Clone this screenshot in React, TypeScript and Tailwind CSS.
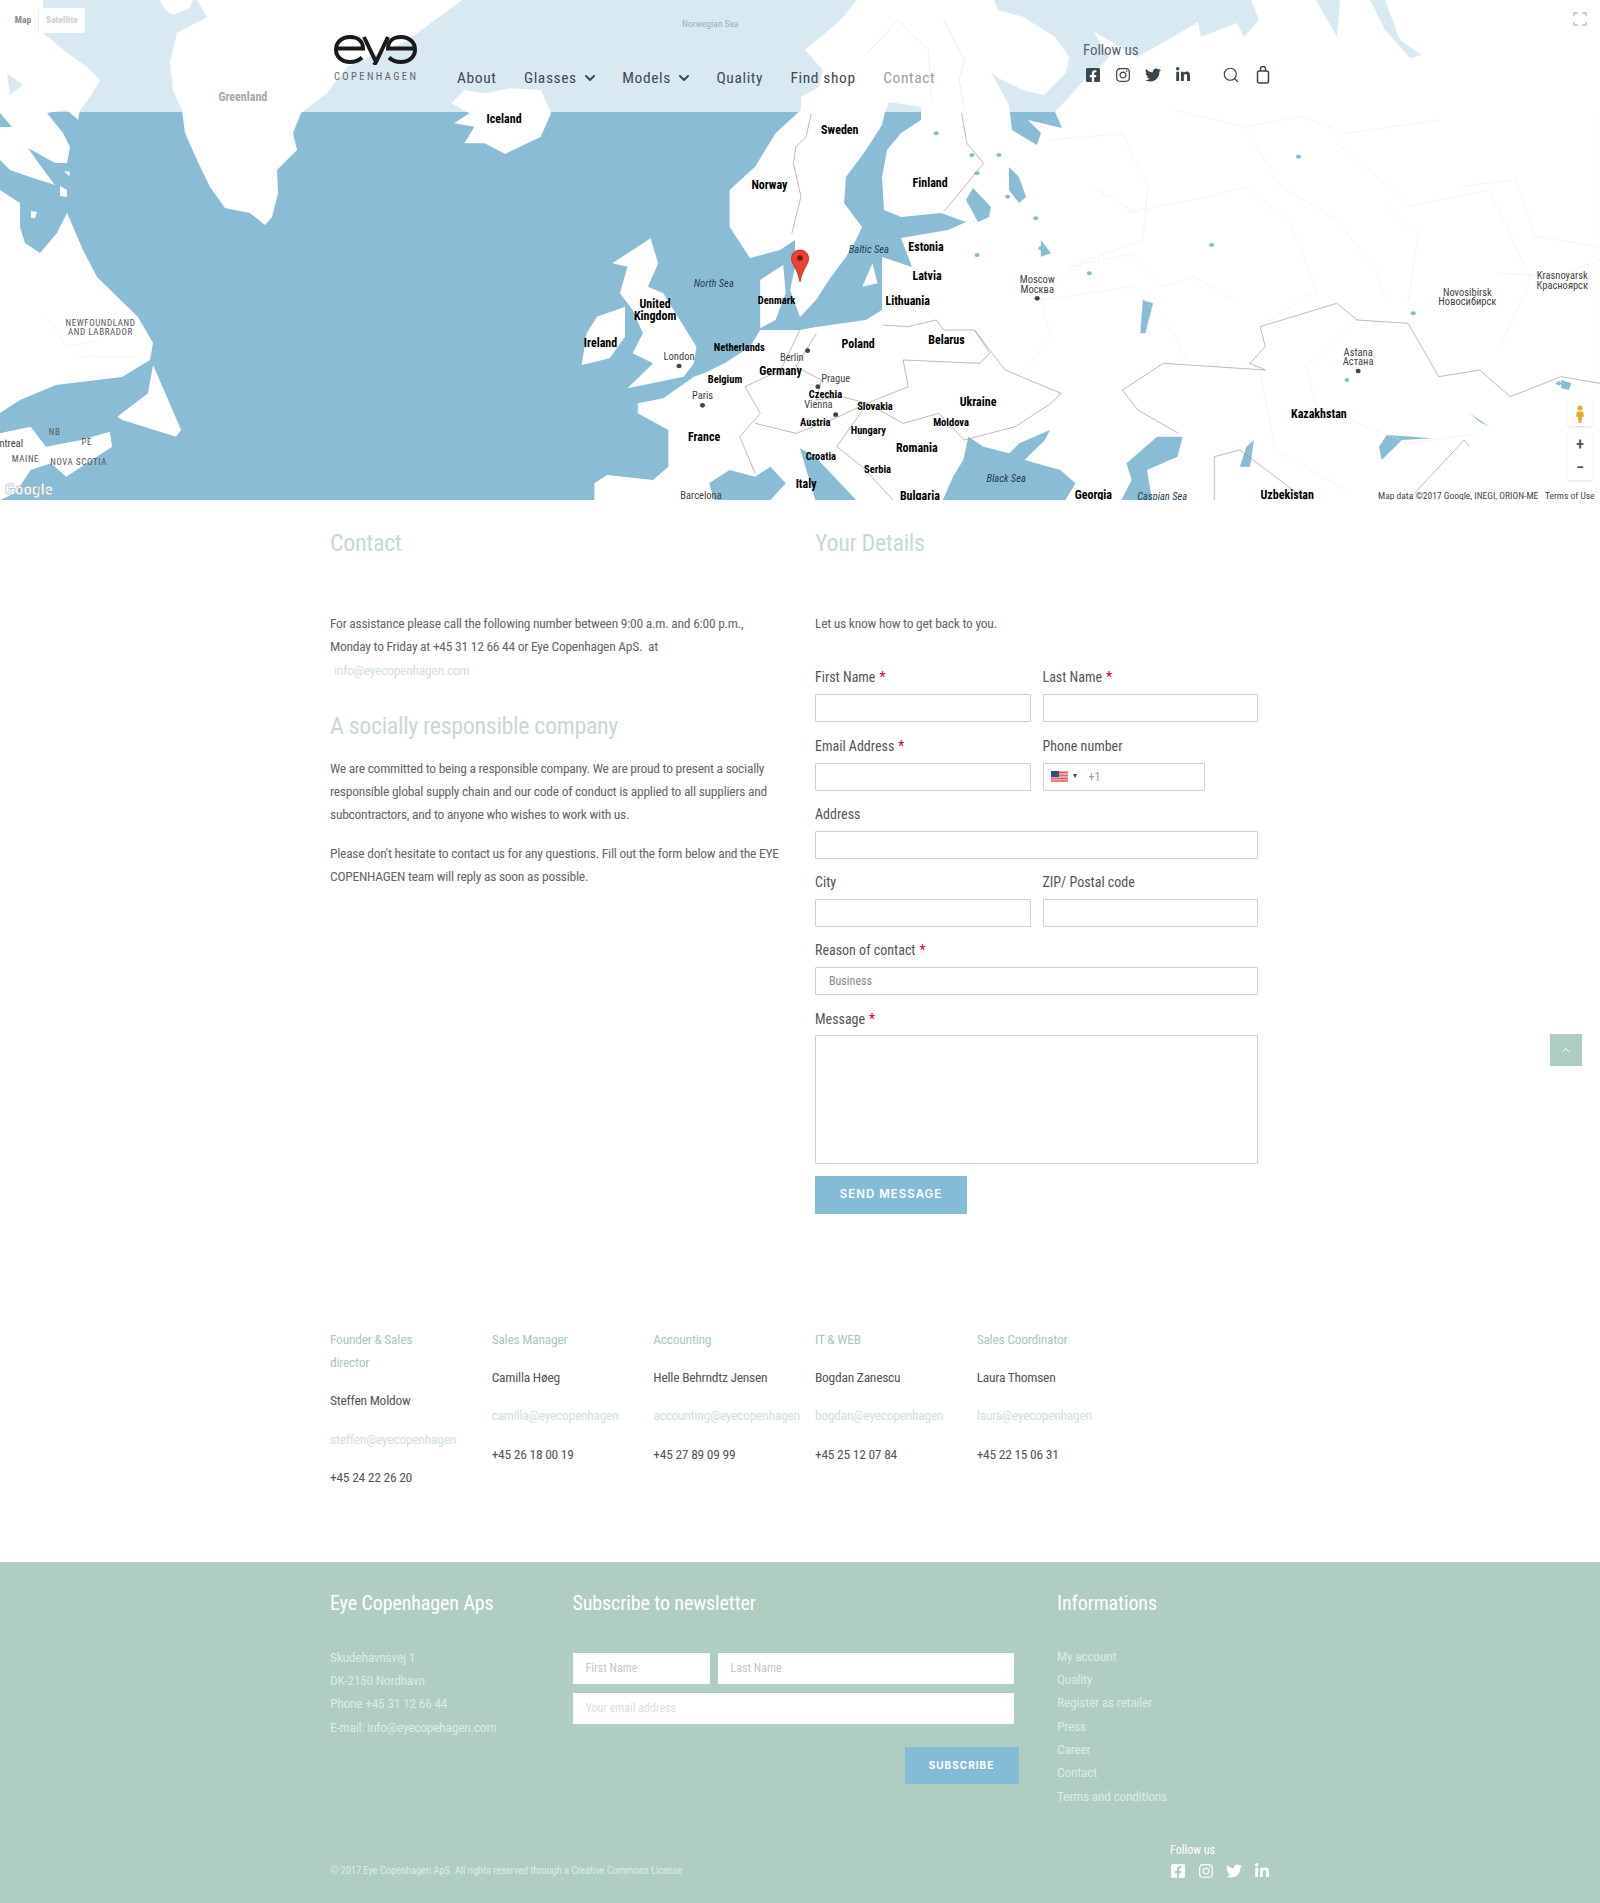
import React from 'react'
import { ChevronDown, ChevronUp, Search } from 'lucide-react'
import { FaFacebookSquare, FaInstagram, FaTwitter, FaLinkedinIn } from 'react-icons/fa'

// map drawing: coordinates are read off the reference crops
// LAND_REAL / WATER_REAL are page pixels, the others go through the group transform
const LAND_REAL = [
  '0,0 43,0 43,33 67,53 87,67 100,80 90,97 80,110 78,120 67,110 63,110 47,113 63,133 70,147 67,163 55,163 28,148 40,165 55,185 30,177 10,170 0,160',
  '0,190 20,203 20,227 25,243 40,253 57,233 67,213 83,250 97,277 138,317 153,343 150,360 122,377 56,385 20,400 0,413',
  '160,0 193,0 190,8 173,15 165,10',
  '197,0 462,0 408,40 347,67 327,93 301,113 293,133 297,150 277,170 278,193 272,217 265,225 250,213 225,208 210,187 197,160 185,133 182,110 173,90 170,63 177,33 207,17',
  '60,186 67,190 67,197 60,196',
  '64,171 70,172 69,176',
  '31,211 37,212 35,218 31,218',
]

const WATER_REAL = [
  '7,73 23,85 10,95',
  '0,113 12,127 0,127',
  '994,0 998,10 1023,17 1055,37 1069,57 1066,73 1044,95 1023,90 998,78 991,72 1009,105 1012,130 1037,145 1041,133 1028,120 1062,128 1055,112 1069,97 1084,80 1109,58 1094,32 1112,42 1137,57 1173,37 1198,22 1201,37 1237,23 1244,37 1259,20 1251,0',
  '1316,0 1337,37 1340,0',
  '1370,0 1385,0 1400,40 1422,55 1410,58 1385,30',
  '800,317 816,300 831,277 846,257 856,240 862,227 844,203 846,177 866,150 882,125 885,112 889,102 921,107 921,120 901,133 887,150 882,177 884,210 901,217 941,213 966,222 948,230 901,238 912,267 882,257 882,287 882,310 866,320 816,327 800,330 760,330 735,333 735,253 750,258 780,250 795,240 795,267 790,290',
  '973,188 991,207 989,217 978,222 966,200',
  '1009,167 1019,177 1026,197 1019,203 1009,190',
]

const LAND = [
  '300,1095 355,1290 345,1310 240,1260 230,1250 290,1180',
  '0,1300 60,1280 90,1340 160,1320 215,1295 220,1340 170,1390 130,1430 100,1390 60,1410 30,1480 0,1500',
  '885,310 910,270 950,280 1000,265 1060,270 1080,340 1060,410 990,462 950,430 910,430 930,380 890,370 920,340',
  '1275,715 1290,790 1270,860 1300,880 1365,1040 1360,1090 1340,1130 1230,1165 1280,1090 1240,1060 1260,1000 1240,930 1215,880 1230,800 1200,790',
  '1170,950 1225,920 1225,1010 1195,1075 1140,1095 1150,1000',
  '1570,330 1570,291 1605,261 1613,210 1578,150 1648,60 1679,0 3136,0 3136,1500 1165,1500 1165,1450 1190,1425 1280,1440 1310,1400 1310,1290 1250,1240 1250,1210 1300,1195 1360,1130 1380,1120 1420,1090 1470,1040 1490,990 1470,775 1430,680 1430,570 1480,500 1520,400',
]

const BLUE = [
  '1400,1500 1390,1450 1430,1410 1480,1430 1510,1400 1540,1450 1510,1500',
  '1568,1345 1598,1370 1678,1500 1598,1500',
  '1898,1310 1928,1340 1978,1360 1998,1330 2058,1290 2048,1320 2008,1380 2078,1410 2108,1450 2088,1500 1848,1500 1868,1430 1888,1380',
  '2208,1390 2268,1310 2318,1310 2308,1370 2248,1410 2258,1500 2198,1500 2218,1440',
  '2703,1340 2718,1305 2808,1315 2748,1320 2708,1380',
  '2443,1340 2458,1320 2450,1400 2430,1400',
  '2880,1240 2920,1280 2900,1265',
  '3060,1140 3080,1150 3075,1170 3060,1165',
  '2040,720 2060,760 2040,770',
  '2240,900 2260,910 2245,1000 2235,1000',
]

const LAKES = [
  [1835, 400], [1905, 465], [1915, 520], [1958, 465], [1975, 590], [2030, 655], [1915, 765], [2040, 745], [2135, 820], [2375, 735], [2545, 470], [2640, 1140], [2770, 940], [3055, 1150],
]

const BORDERS = [
  '1590,340 1580,410 1560,440 1555,490 1570,590 1552,700',
  '1885,340 1895,430 1928,490 1850,635',
  '1730,975 1780,980 1835,960 1850,990 1910,990 1940,1060 1920,1090 1770,1080 1780,1160 1700,1210',
  '1600,1000 1560,1100 1610,1140 1600,1200 1650,1190 1700,1210 1770,1270 1840,1240 1890,1320',
  '1568,990 1530,1110 1460,1160 1490,1240 1450,1310 1480,1420',
  '1480,1270 1560,1300 1630,1260 1700,1210 1640,1340 1690,1400 1750,1500',
  '1910,990 1970,1110 2080,1180 2060,1210 1990,1280 1890,1320',
  '2470,980 2620,910 2660,960 2760,970 2820,1130 2900,1110 2960,1190 3060,1130 3136,1150',
  '2470,980 2480,1040 2450,1090 2480,1110 2280,1090 2200,1170 2230,1230 2310,1300',
  '2380,1500 2380,1370 2430,1350 2560,1500',
  '2880,1340 2870,1320 2760,1500',
]

const FAINT = [
  '1700,160 1760,60 1820,150 1825,300',
  '1850,60 1890,180 1880,240 1890,330',
]

const REGIONS = [
  '2060,420 2200,400 2250,560 2240,720 2100,800 2040,900 2060,1010 2010,1110',
  '2200,640 2370,590 2440,560 2530,670 2580,870 2470,980',
  '2440,380 2510,560 2620,660 2700,820 2720,910',
  '2620,430 2720,560 2760,620 2920,570 3000,840 2940,1040',
  '2040,900 2220,860 2300,1000 2330,1090',
  '2720,620 2780,700 2760,900',
  '2940,820 3050,830 3136,780',
  '2660,960 2560,1100 2580,1220 2760,1330 2900,1300',
  '2100,800 2220,760 2280,860 2340,830 2420,900',
  '2140,560 2230,640',
  '2300,330 2440,380 2550,350 2640,400 2820,360',
  '2860,560 2970,540 3010,710 3136,740',
  '2470,1120 2500,1350 2650,1480',
  '150,1070 270,1070',
  '90,950 130,1040 200,1020',
]

const LABELS: { t: string; x: number; y: number; k: 'b' | 's' | 'r' | 'i' | 'g' | 'p' | 'c' }[] = [
  { t: 'Greenland', x: 476, y: 303, k: 'g' },
  { t: 'Iceland', x: 988, y: 368, k: 'b' },
  { t: 'Norwegian Sea', x: 1392, y: 82, k: 'p' },
  { t: 'Norway', x: 1508, y: 566, k: 'b' },
  { t: 'Sweden', x: 1646, y: 401, k: 'b' },
  { t: 'Finland', x: 1823, y: 560, k: 'b' },
  { t: 'Estonia', x: 1815, y: 752, k: 'b' },
  { t: 'Latvia', x: 1817, y: 841, k: 'b' },
  { t: 'Lithuania', x: 1779, y: 914, k: 'b' },
  { t: 'Baltic Sea', x: 1703, y: 758, k: 'i' },
  { t: 'North Sea', x: 1399, y: 862, k: 'i' },
  { t: 'Denmark', x: 1522, y: 912, k: 's' },
  { t: 'United', x: 1284, y: 925, k: 'b' },
  { t: 'Kingdom', x: 1284, y: 961, k: 'b' },
  { t: 'Ireland', x: 1177, y: 1041, k: 'b' },
  { t: 'Netherlands', x: 1449, y: 1054, k: 's' },
  { t: 'London', x: 1331, y: 1080, k: 'r' },
  { t: 'Berlin', x: 1552, y: 1082, k: 'r' },
  { t: 'Germany', x: 1530, y: 1124, k: 'b' },
  { t: 'Belgium', x: 1421, y: 1150, k: 's' },
  { t: 'Paris', x: 1377, y: 1197, k: 'r' },
  { t: 'France', x: 1380, y: 1322, k: 'b' },
  { t: 'Barcelona', x: 1374, y: 1497, k: 'r' },
  { t: 'Italy', x: 1580, y: 1465, k: 'b' },
  { t: 'Poland', x: 1682, y: 1044, k: 'b' },
  { t: 'Belarus', x: 1855, y: 1031, k: 'b' },
  { t: 'Prague', x: 1638, y: 1145, k: 'r' },
  { t: 'Czechia', x: 1618, y: 1195, k: 's' },
  { t: 'Vienna', x: 1604, y: 1225, k: 'r' },
  { t: 'Slovakia', x: 1715, y: 1230, k: 's' },
  { t: 'Austria', x: 1598, y: 1278, k: 's' },
  { t: 'Hungary', x: 1702, y: 1303, k: 's' },
  { t: 'Ukraine', x: 1917, y: 1219, k: 'b' },
  { t: 'Moldova', x: 1864, y: 1277, k: 's' },
  { t: 'Romania', x: 1797, y: 1357, k: 'b' },
  { t: 'Croatia', x: 1609, y: 1380, k: 's' },
  { t: 'Serbia', x: 1720, y: 1420, k: 's' },
  { t: 'Bulgaria', x: 1803, y: 1500, k: 'b' },
  { t: 'Black Sea', x: 1972, y: 1447, k: 'i' },
  { t: 'Georgia', x: 2143, y: 1496, k: 'b' },
  { t: 'Caspian Sea', x: 2278, y: 1500, k: 'i' },
  { t: 'Moscow', x: 2033, y: 850, k: 'r' },
  { t: 'Москва', x: 2033, y: 878, k: 'r' },
  { t: 'Kazakhstan', x: 2585, y: 1254, k: 'b' },
  { t: 'Uzbekistan', x: 2523, y: 1498, k: 'b' },
  { t: 'Astana', x: 2662, y: 1067, k: 'r' },
  { t: 'Астана', x: 2662, y: 1095, k: 'r' },
  { t: 'Novosibirsk', x: 2876, y: 888, k: 'r' },
  { t: 'Новосибирск', x: 2876, y: 916, k: 'r' },
  { t: 'Krasnoyarsk', x: 3062, y: 838, k: 'r' },
  { t: 'Красноярск', x: 3062, y: 866, k: 'r' },
  { t: 'NEWFOUNDLAND', x: 197, y: 979, k: 'c' },
  { t: 'AND LABRADOR', x: 197, y: 1006, k: 'c' },
  { t: 'NB', x: 107, y: 1305, k: 'c' },
  { t: 'PE', x: 170, y: 1335, k: 'c' },
  { t: 'MAINE', x: 50, y: 1385, k: 'c' },
  { t: 'NOVA SCOTIA', x: 154, y: 1395, k: 'c' },
  { t: 'ntreal', x: 22, y: 1340, k: 'r' },
]

const CITY_DOTS = [
  [1331, 1098], [1377, 1216], [1583, 1052], [1603, 1160], [1638, 1244], [2033, 895], [2662, 1113],
]

const labelClass = {
  b: 'fill-black font-bold text-[12px]',
  s: 'fill-black font-bold text-[10.5px]',
  r: 'fill-[#444444] text-[10.5px]',
  c: 'fill-[#555555] text-[9px] tracking-[0.6px]',
  i: 'fill-[#1d3c50] italic text-[10.5px]',
  g: 'fill-[#a8a8a8] font-bold text-[12px]',
  p: 'fill-[#93b2c2] text-[9.5px]',
}

const MapDrawing = () => (
  <svg className="block w-[1600px] h-[500px]" viewBox="0 0 1600 500">
    <rect width="1600" height="500" fill="#8abcd6" />
    <g transform="scale(0.5102 0.33333)">
      {LAND.map((p, i) => <polygon key={i} points={p} fill="#ffffff" />)}
    </g>
    {LAND_REAL.map((p, i) => <polygon key={i} points={p} fill="#ffffff" />)}
    {WATER_REAL.map((p, i) => <polygon key={i} points={p} fill="#8abcd6" />)}
    <g transform="scale(0.5102 0.33333)">
      {BLUE.map((p, i) => <polygon key={i} points={p} fill="#8abcd6" />)}
      {LAKES.map(([x, y], i) => <ellipse key={i} cx={x} cy={y} rx="5" ry="6" fill="#8abcd6" />)}
      <polygon points="1490,890 1490,840 1535,795 1540,880 1520,960 1490,985" fill="#ffffff" />
      <polygon points="1690,860 1710,790 1720,850" fill="#ffffff" />
    </g>
    <rect width="1600" height="112" fill="#ffffff" opacity="0.68" />
    <g transform="scale(0.5102 0.33333)" fill="none">
      {REGIONS.map((p, i) => <polyline key={i} points={p} stroke="#e2e2e2" strokeWidth="1.6" strokeDasharray="5 4" />)}
      {FAINT.map((p, i) => <polyline key={i} points={p} stroke="#e4e4e4" strokeWidth="1.6" />)}
      {BORDERS.map((p, i) => <polyline key={i} points={p} stroke="#9a9a9a" strokeWidth="1.6" />)}
      {CITY_DOTS.map(([x, y], i) => <ellipse key={i} cx={x} cy={y} rx="5" ry="7" fill="#444444" />)}
    </g>
    {LABELS.map(l => (
      <text key={l.t} x={l.x * 0.5102} y={l.y / 3} textAnchor="middle" className={labelClass[l.k]}>
        {l.t}
      </text>
    ))}
    <path d="M800 250c-5 0-8.500 3.800-8.500 8.500 0 6 5.500 9 8.500 23 3-14 8.500-17 8.500-23 0-4.700-3.500-8.500-8.500-8.500z" fill="#ea4335" stroke="#c5302a" />
    <circle cx="800" cy="258" r="2.800" fill="#7a1712" />
    <text x="5" y="495" className="fill-white font-bold text-[17px]" stroke="#7d9aa8" strokeWidth="0.4">Google</text>
    <text x="1378" y="499" className="fill-[#444444] text-[9.5px]">Map data ©2017 Google, INEGI, ORION-ME</text>
    <text x="1545" y="499" className="fill-[#444444] text-[9.5px]">Terms of Use</text>
  </svg>
)

const Logo = () => (
  <div className="w-[83px] ml-1">
    <svg className="block" width="83" height="30" viewBox="0 0 83 30" fill="none" stroke="#1a1a1a" strokeWidth="4">
      <path d="M2 13.500h27c0-7-5-11.500-13-11.500S2 7 2 14.500 8 27 16 27c5 0 9-1.500 12-4.500" />
      <path d="M30 2l12 25M54 2L42 27l-2 3" />
      <path d="M81 13.500H54c0-7 5-11.500 13-11.500S81 7 81 14.500 75 27 67 27c-5 0-9-1.500-12-4.500" />
    </svg>
    <div className="mt-[6px] text-[10.5px] leading-[12px] tracking-[2.4px] text-[#666666] whitespace-nowrap">COPENHAGEN</div>
  </div>
)

const SocialIcons = ({ className }: { className: string }) => (
  <div className={className}>
    <FaFacebookSquare className="w-[16px] h-[16px]" />
    <FaInstagram className="w-[16px] h-[16px]" />
    <FaTwitter className="w-[16px] h-[16px]" />
    <FaLinkedinIn className="w-[16px] h-[16px]" />
  </div>
)

const NavLink = ({ label, arrow, muted }: { label: string; arrow?: boolean; muted?: boolean }) => (
  <a className={`flex items-center gap-[5px] tracking-[0.6px] ${muted ? 'text-[#98a2a2]' : 'text-[#3f4a50]'}`}>
    {label}
    {arrow && <ChevronDown className="w-[16px] h-[16px] -mr-[3px]" strokeWidth={3} />}
  </a>
)

const Header = () => (
  <div className="absolute inset-x-0 top-0">
    <div className="mx-auto w-[940px] flex items-start pt-[35px]">
      <Logo />
      <nav className="w-[669px] pl-[40px] mt-[31px] flex gap-[27.5px] text-[15.5px] leading-[24px]">
        <NavLink label="About" />
        <NavLink label="Glasses" arrow />
        <NavLink label="Models" arrow />
        <NavLink label="Quality" />
        <NavLink label="Find shop" />
        <NavLink label="Contact" muted />
      </nav>
      <div className="mt-[5px] -ml-[3px]">
        <div className="text-[15px] leading-[20px] tracking-[-0.1px] text-[#5b666c]">Follow us</div>
        <div className="flex items-center mt-[6px]">
          <SocialIcons className="flex items-center gap-[14px] pl-[2px] text-[#3a454b]" />
          <Search className="ml-[31px] w-[18px] h-[18px] text-[#3a454b]" strokeWidth={1.5} />
          <svg className="ml-[16px] text-[#3a454b]" width="14" height="18" viewBox="0 0 14 18" fill="none" stroke="currentColor" strokeWidth="1.5">
            <rect x="1.500" y="5" width="11" height="12" rx="2" />
            <path d="M4.500 5V2.500a2.500 2 0 0 1 5 0V5" />
          </svg>
        </div>
      </div>
    </div>
  </div>
)

const MapControls = () => (
  <>
    <div className="absolute left-[8px] top-[8px] h-[25px] w-[77px] flex items-center bg-white/90 text-[9.5px] font-bold">
      <span className="h-full w-[31px] bg-white border-r border-[#eeeeee] flex items-center justify-center text-[#8a8a8a]">Map</span>
      <span className="pl-[7px] text-[#d0d0d0]">Satellite</span>
    </div>
    <svg className="absolute left-[1573px] top-[12px]" width="14" height="14" viewBox="0 0 14 14" fill="none" stroke="#c4c4c4" strokeWidth="1.500">
      <path d="M1 4V1h4M9 1h4v3M13 10v3H9M5 13H1v-3" />
    </svg>
    <div className="absolute left-[1568px] top-[401px] w-[24px] h-[25px] bg-white flex items-center justify-center shadow-sm">
      <svg width="10" height="18" viewBox="0 0 10 18" fill="#e8a92c">
        <circle cx="5" cy="3" r="2.500" />
        <path d="M2 6.500h6l1 5-2 .5-.5 6h-3l-.5-6-2-.5z" />
      </svg>
    </div>
    <div className="absolute left-[1568px] top-[433px] w-[24px] h-[47px] bg-white shadow-sm flex flex-col items-center justify-around text-[#555555] font-bold text-[16px] leading-none">
      <span>+</span>
      <span>−</span>
    </div>
  </>
)

const Field = ({ label, required, children, wide }: { label: string; required?: boolean; children: React.ReactNode; wide?: boolean }) => (
  <div className={`mb-[13.3px] ${wide ? 'col-span-2' : ''}`}>
    <label className="block h-[20px] mb-[7px] text-[14px] leading-[20px] text-[#555555]">
      {label}
      {required && <span className="ml-[4px] text-[#d0021b]">*</span>}
    </label>
    {children}
  </div>
)

const inputClass = 'block w-full h-[28px] border border-[#cfcfcf] bg-white rounded-[1px] outline-none'

const Form = () => (
  <form className="mt-[32px] w-[443px]">
    <div className="grid grid-cols-2 gap-x-[12px]">
      <Field label="First Name" required><input className={inputClass} /></Field>
      <Field label="Last Name" required><input className={inputClass} /></Field>
      <Field label="Email Address" required><input className={inputClass} /></Field>
      <Field label="Phone number">
        <div className="w-[162px] h-[28px] border border-[#cfcfcf] rounded-[1px] flex items-center pl-[7px] text-[12px] text-[#999999]">
          <svg width="17" height="11" viewBox="0 0 17 11">
            <rect width="17" height="11" fill="#e9a5a8" />
            <path d="M0 1.500h17M0 4.500h17M0 7.500h17M0 10h17" stroke="#d9626a" strokeWidth="1" />
            <rect width="8" height="6" fill="#3e4a78" />
          </svg>
          <span className="ml-[4px] text-[7px] text-[#444444]">▼</span>
          <span className="ml-[10px]">+1</span>
        </div>
      </Field>
      <Field label="Address" wide><input className={inputClass} /></Field>
      <Field label="City"><input className={inputClass} /></Field>
      <Field label="ZIP/ Postal code"><input className={inputClass} /></Field>
      <Field label="Reason of contact" required wide>
        <select defaultValue="Business" className={`${inputClass} appearance-none pl-[13px] text-[12px] text-[#888888]`}>
          <option>Business</option>
        </select>
      </Field>
    </div>
    <label className="block h-[20px] mb-[6px] text-[14px] leading-[20px] text-[#555555]">
      Message<span className="ml-[4px] text-[#d0021b]">*</span>
    </label>
    <textarea className="block w-full h-[129px] border border-[#cfcfcf] rounded-[1px] outline-none resize-none" />
    <button type="button" className="mt-[12px] w-[152px] h-[38px] bg-[#84bbd5] text-white font-['Inter',sans-serif] font-semibold text-[11.5px] tracking-[1px]">
      SEND MESSAGE
    </button>
  </form>
)

const TEAM = [
  { role: 'Founder & Sales director', name: 'Steffen Moldow', mail: 'steffen@eyecopenhagen', phone: '+45 24 22 26 20' },
  { role: 'Sales Manager', name: 'Camilla Høeg', mail: 'camilla@eyecopenhagen', phone: '+45 26 18 00 19' },
  { role: 'Accounting', name: 'Helle Behrndtz Jensen', mail: 'accounting@eyecopenhagen', phone: '+45 27 89 09 99' },
  { role: 'IT & WEB', name: 'Bogdan Zanescu', mail: 'bogdan@eyecopenhagen', phone: '+45 25 12 07 84' },
  { role: 'Sales Coordinator', name: 'Laura Thomsen', mail: 'laura@eyecopenhagen', phone: '+45 22 15 06 31' },
]

const bodyText = 'text-[13.5px] leading-[23.3px] tracking-[-0.25px]'

const Team = () => (
  <section className={`mt-[114px] grid grid-cols-[repeat(5,161.67px)] h-[234px] ${bodyText}`}>
    {TEAM.map(m => (
      <div key={m.name}>
        <div className="max-w-[100px] text-[#a9c8be]">{m.role}</div>
        <div className="mt-[15px] text-[#555555]">{m.name}</div>
        <div className="mt-[15px] text-[#cfe0da] whitespace-nowrap">{m.mail}</div>
        <div className="mt-[15px] text-[#555555]">{m.phone}</div>
      </div>
    ))}
  </section>
)

const FOOTER_LINKS = ['My account', 'Quality', 'Register as retailer', 'Press', 'Career', 'Contact', 'Terms and conditions']

const footerHeading = 'text-[20px] leading-[30px] tracking-[-0.1px] text-white'

const Footer = () => (
  <footer className="h-[341px] bg-[#afcdc1] pt-[26px]">
    <div className="mx-auto w-[940px]">
      <div className="grid grid-cols-[242.5px_484.5px_1fr]">
        <div>
          <h3 className={footerHeading}>Eye Copenhagen Aps</h3>
          <div className={`mt-[28px] text-[#dcebe5] ${bodyText}`}>
            <div>Skudehavnsvej 1</div>
            <div>DK-2150 Nordhavn</div>
            <div>Phone +45 31 12 66 44</div>
            <div>E-mail: info@eyecopehagen.com</div>
          </div>
        </div>
        <div>
          <h3 className={footerHeading}>Subscribe to newsletter</h3>
          <div className="mt-[35px] flex gap-[8px] w-[441px]">
            <input placeholder="First Name" className="w-[137px] h-[31px] bg-white pl-[13px] text-[12px] outline-none placeholder:text-[#c5c5c5]" />
            <input placeholder="Last Name" className="flex-1 h-[31px] bg-white pl-[13px] text-[12px] outline-none placeholder:text-[#c5c5c5]" />
          </div>
          <input placeholder="Your email address" className="block mt-[9px] w-[441px] h-[31px] bg-white pl-[13px] text-[12px] outline-none placeholder:text-[#dddddd]" />
          <button type="button" className="block mt-[23px] ml-[332px] w-[114px] h-[37px] bg-[#84bbd5] text-white font-['Inter',sans-serif] font-bold text-[10px] tracking-[1px]">
            SUBSCRIBE
          </button>
        </div>
        <div>
          <h3 className={footerHeading}>Informations</h3>
          <ul className={`mt-[27px] text-[#dcebe5] ${bodyText}`}>
            {FOOTER_LINKS.map(l => <li key={l}>{l}</li>)}
          </ul>
        </div>
      </div>
      <div className="mt-[35px] flex items-end">
        <div className="w-[841px] text-[10.8px] leading-[16px] tracking-[-0.2px] text-[#dcebe5]">
          © 2017 Eye Copenhagen ApS. All rights reserved through a Creative Commons License
        </div>
        <div>
          <div className="text-[12px] leading-[14px] text-white">Follow us</div>
          <SocialIcons className="mt-[6px] flex items-center gap-[12px] text-white" />
        </div>
      </div>
    </div>
  </footer>
)

const heading = 'text-[24px] leading-[36px] tracking-[-0.35px] text-[#c6d9d3]'

export default function App() {
  return (
    <div className="relative w-[1600px] bg-white font-['Liberation_Sans_Narrow','Roboto_Condensed','Roboto',sans-serif]">
      <div className="relative h-[500px] overflow-hidden">
        <MapDrawing />
        <MapControls />
        <Header />
      </div>

      <main className="mx-auto w-[940px]">
        <div className="grid grid-cols-[485px_1fr]">
          <div className="pt-[25px] pr-[28px]">
            <h2 className={heading}>Contact</h2>
            <p className={`mt-[51px] text-[#666666] ${bodyText}`}>
              For assistance please call the following number between 9:00 a.m. and 6:00 p.m.,
              <br />
              Monday to Friday at +45 31 12 66 44 or Eye Copenhagen ApS.&nbsp; at
              <br />
              <span className="ml-1 text-[#cfe0da]">info@eyecopenhagen.com</span>
            </p>
            <h2 className={`mt-[26px] ${heading}`}>A socially responsible company</h2>
            <p className={`mt-[13px] text-[#666666] ${bodyText}`}>
              We are committed to being a responsible company. We are proud to present a socially responsible global
              supply chain and our code of conduct is applied to all suppliers and subcontractors, and to anyone who
              wishes to work with us.
            </p>
            <p className={`mt-[15px] text-[#666666] ${bodyText}`}>
              Please don't hesitate to contact us for any questions. Fill out the form below and the EYE COPENHAGEN team
              will reply as soon as possible.
            </p>
          </div>
          <div className="pt-[25px]">
            <h2 className={heading}>Your Details</h2>
            <p className={`mt-[51px] text-[#666666] ${bodyText}`}>Let us know how to get back to you.</p>
            <Form />
          </div>
        </div>
        <Team />
      </main>

      <Footer />

      <button type="button" className="absolute left-[1550px] top-[1034px] w-[32px] h-[32px] bg-[#afcdc1] flex items-center justify-center text-white">
        <ChevronUp className="w-[12px] h-[12px]" />
      </button>
    </div>
  )
}
